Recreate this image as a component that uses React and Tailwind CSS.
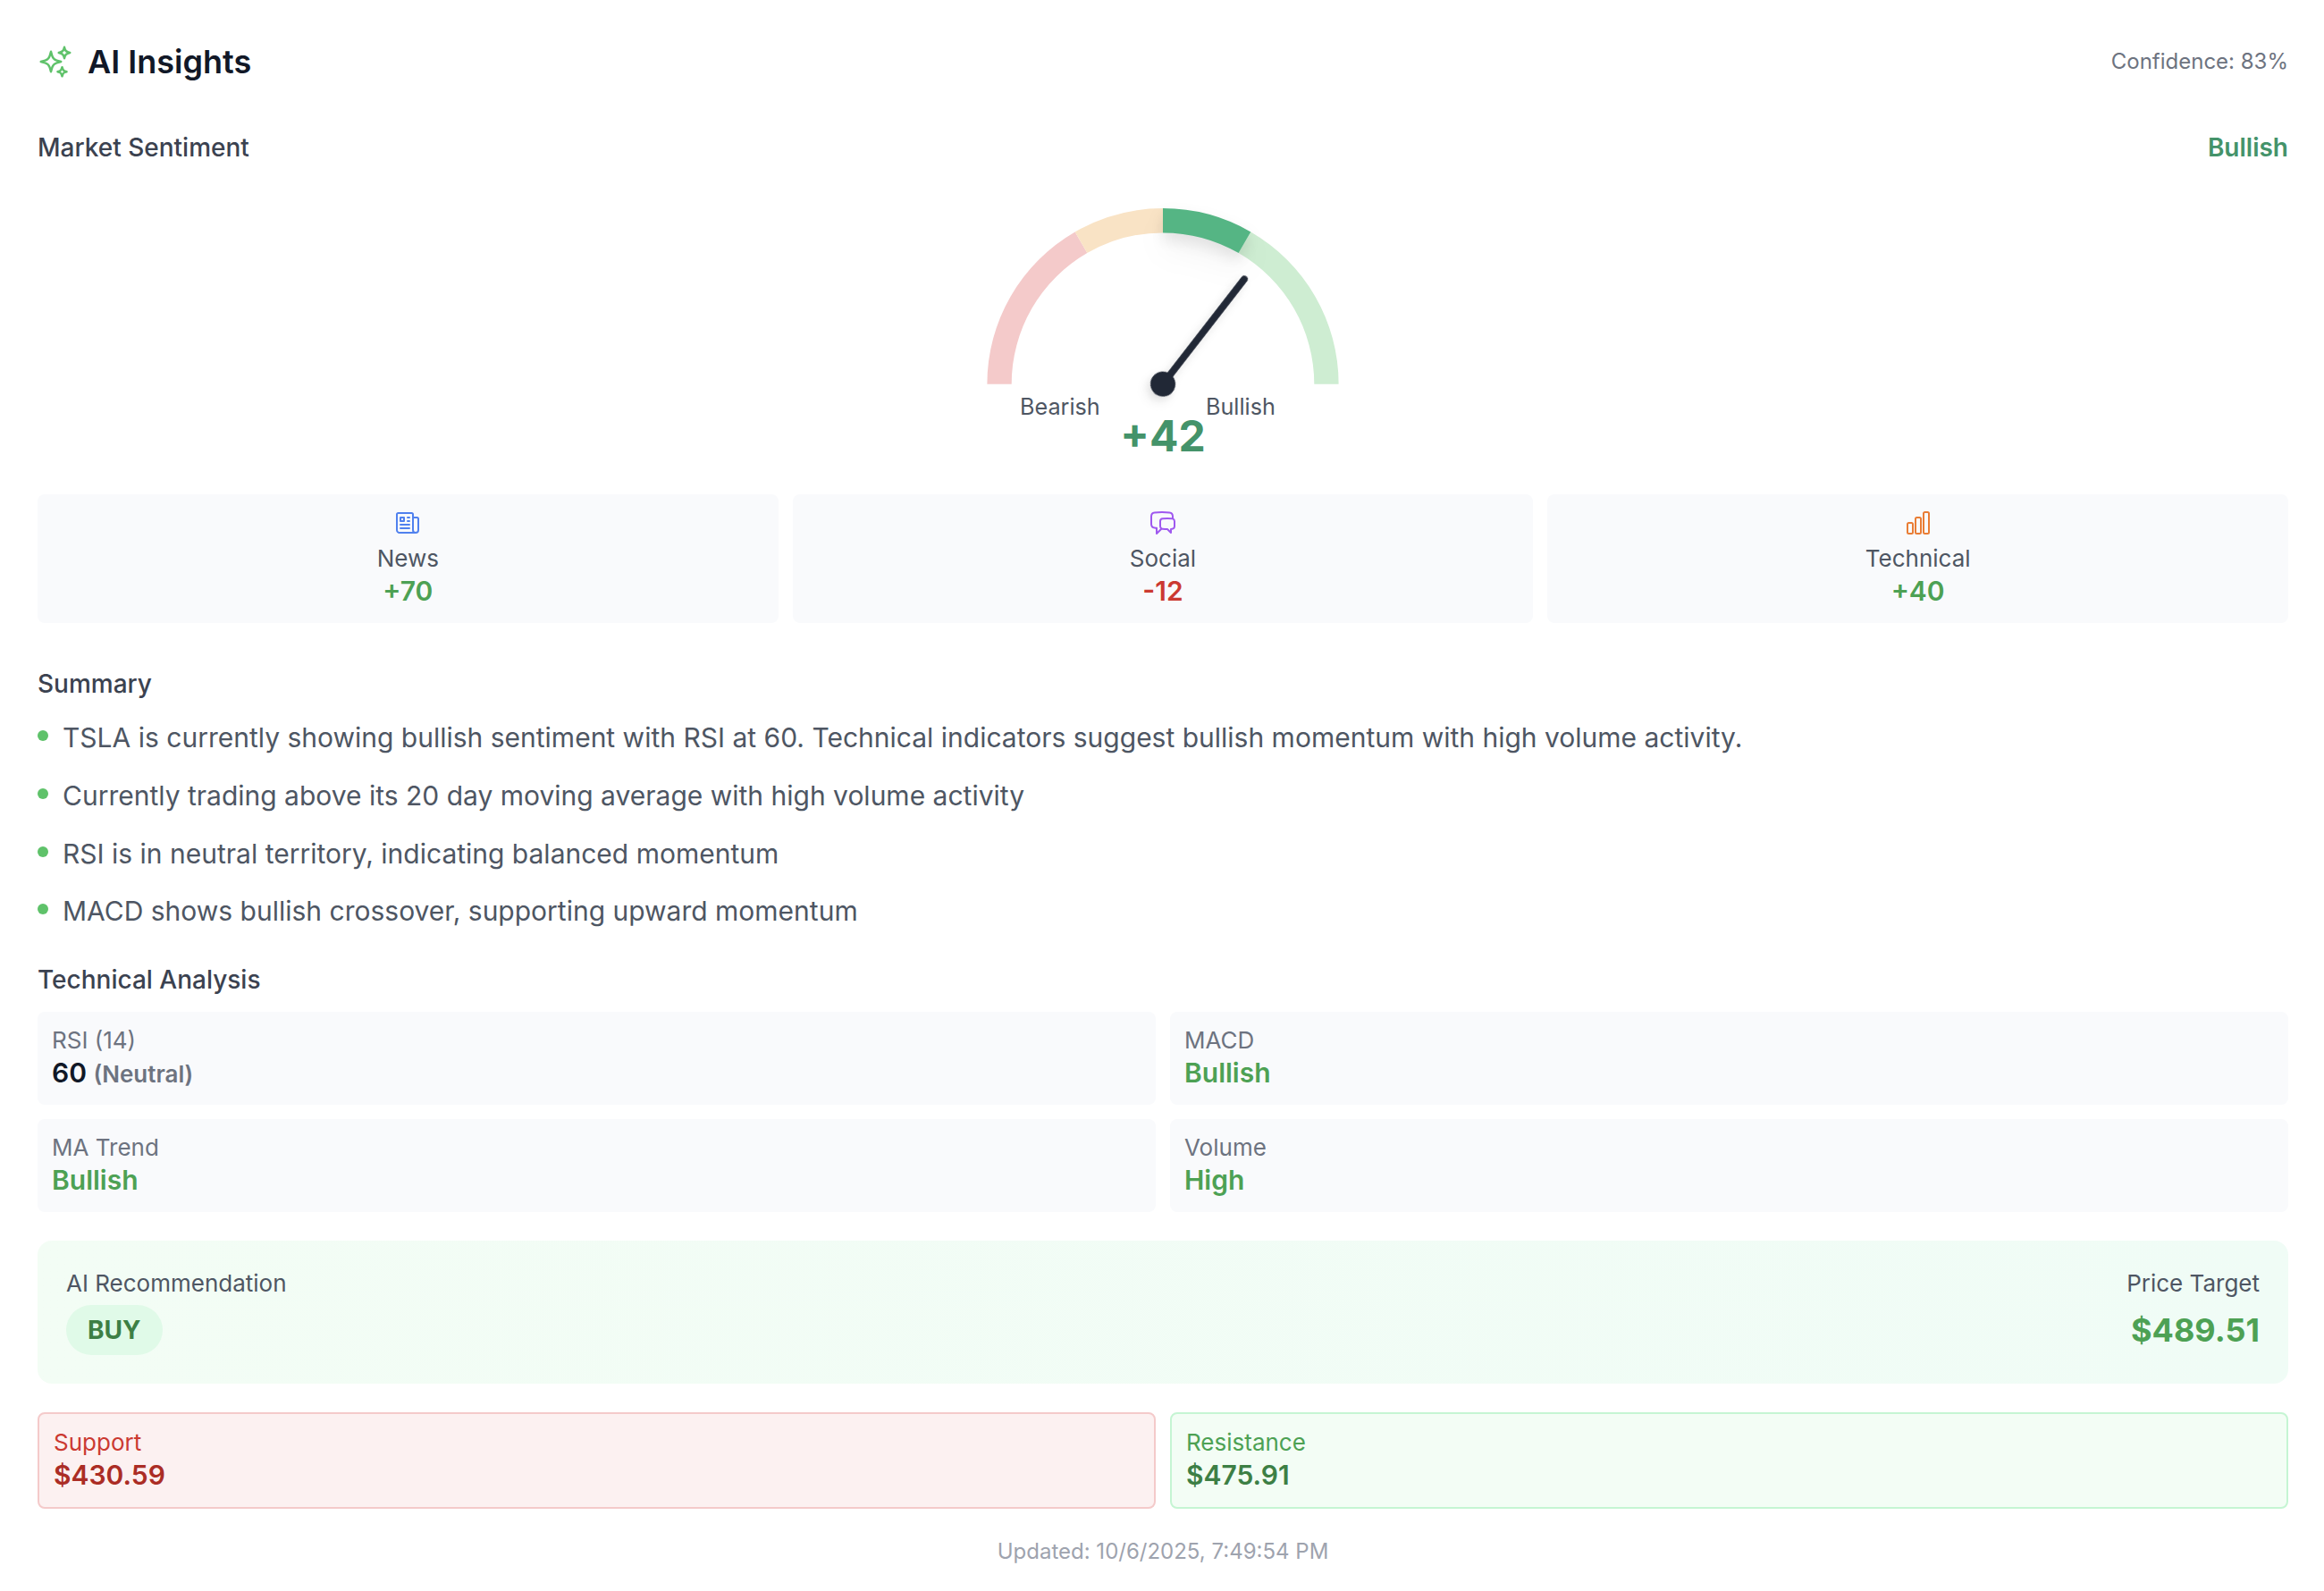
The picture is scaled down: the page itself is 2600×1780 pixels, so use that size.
import {
  HiOutlineSparkles,
  HiOutlineNewspaper,
  HiOutlineChatBubbleLeftRight,
  HiOutlineChartBar,
} from 'react-icons/hi2';

const insights = {
  confidence: 83,
  score: 42,
  summary: [
    'TSLA is currently showing bullish sentiment with RSI at 60. Technical indicators suggest bullish momentum with high volume activity.',
    'Currently trading above its 20 day moving average with high volume activity',
    'RSI is in neutral territory, indicating balanced momentum',
    'MACD shows bullish crossover, supporting upward momentum',
  ],
};

// Point on the gauge, angle 0 = far left, 180 = far right
function polar(r, angle) {
  const rad = ((180 - angle) * Math.PI) / 180;
  return `${220 + r * Math.cos(rad)} ${244.7 - r * Math.sin(rad)}`;
}

function segment(from, to) {
  return `M ${polar(196.6, from)} A 196.6 196.6 0 0 1 ${polar(196.6, to)} L ${polar(169.3, to)} A 169.3 169.3 0 0 0 ${polar(169.3, from)} Z`;
}

function Gauge({ score }) {
  const rotation = (score / 100) * 90;
  return (
    <svg width="440" height="279" viewBox="0 0 440 279" className="overflow-visible">
      <path d={segment(0, 60)} fill="#f4caca" />
      <path d={segment(60, 90)} fill="#f9e3c5" />
      <path d={segment(120, 180)} fill="#ceedd2" />
      <path
        d={segment(90, 120)}
        fill="#55b584"
        className="[filter:drop-shadow(0_20px_16px_rgb(0_0_0/0.04))_drop-shadow(0_8px_8px_rgb(0_0_0/0.1))]"
      />

      {/* Needle */}
      <g transform={`rotate(${rotation} 220 244.7)`}>
        <g className="[filter:drop-shadow(0_8px_6px_rgb(0_0_0/0.07))_drop-shadow(0_4px_4px_rgb(0_0_0/0.06))]">
          <line x1="220" y1="244.7" x2="220" y2="96.2" stroke="#212836" strokeWidth="7.8" strokeLinecap="round" />
          <circle cx="220" cy="244.7" r="14" fill="#212836" />
        </g>
      </g>

      <text x="60" y="279" fontSize="25.2" fill="#4e5663">Bearish</text>
      <text x="268" y="279" fontSize="25.2" fill="#4e5663">Bullish</text>
    </svg>
  );
}

function SourceCard({ icon, label, value, color }) {
  return (
    <div className="bg-[#f9fafc] rounded-lg p-4 flex flex-col items-center">
      {icon}
      <div className="mt-2 text-[26px] leading-8 text-[#4e5663]">{label}</div>
      <div className={`text-[30px] leading-10 font-semibold ${color}`}>{value}</div>
    </div>
  );
}

function IndicatorCard({ label, children }) {
  return (
    <div className="bg-[#f9fafc] rounded-lg p-4 h-[104px]">
      <div className="text-[26px] leading-8 text-[#6d7380]">{label}</div>
      <div className="text-[30px] leading-10 font-semibold text-[#4da154]">{children}</div>
    </div>
  );
}

export default function App() {
  return (
    <div className="w-[2600px] h-[1780px] bg-white pt-[41px] pl-[42px] pr-10 font-['Inter',sans-serif] overflow-hidden">
      {/* Header */}
      <div className="flex items-center justify-between mb-12">
        <div className="flex items-center gap-4">
          <HiOutlineSparkles className="w-10 h-10 text-[#5fc26a]" />
          <h3 className="text-[36px] leading-[56px] font-semibold text-[#111827]">AI Insights</h3>
        </div>
        <span className="text-2xl leading-8 text-[#6d7380]">Confidence: {insights.confidence}%</span>
      </div>

      {/* Market sentiment */}
      <div className="mb-12">
        <div className="flex items-center justify-between text-[28px] leading-10">
          <span className="font-medium text-[#3b4250]">Market Sentiment</span>
          <span className="font-semibold text-[#44936a]">Bullish</span>
        </div>
        <div className="flex flex-col items-center mb-[41px]">
          <Gauge score={insights.score} />
          <div className="text-[48px] leading-[48px] font-bold text-[#44936a]">+{insights.score}</div>
        </div>
        <div className="grid grid-cols-3 gap-4">
          <SourceCard
            icon={<HiOutlineNewspaper className="w-8 h-8 text-[#5081ee]" />}
            label="News"
            value="+70"
            color="text-[#4da154]"
          />
          <SourceCard
            icon={<HiOutlineChatBubbleLeftRight className="w-8 h-8 text-[#9f58ef]" />}
            label="Social"
            value="-12"
            color="text-[#cb3a31]"
          />
          <SourceCard
            icon={<HiOutlineChartBar className="w-8 h-8 text-[#e97d35]" />}
            label="Technical"
            value="+40"
            color="text-[#4da154]"
          />
        </div>
      </div>

      {/* Summary */}
      <div className="mb-8">
        <h4 className="text-[28px] leading-10 font-medium text-[#3b4250] mb-4">Summary</h4>
        <ul className="flex flex-col gap-4">
          {insights.summary.map((line) => (
            <li key={line} className="flex items-start gap-4">
              <span className="w-3 h-3 mt-4 rounded-full bg-[#5fc26a] shrink-0" />
              <span className="text-[30px] leading-[48.75px] text-[#4e5663]">{line}</span>
            </li>
          ))}
        </ul>
      </div>

      {/* Technical analysis */}
      <div className="mb-8">
        <h4 className="text-[28px] leading-10 font-medium text-[#3b4250] mb-4">Technical Analysis</h4>
        <div className="grid grid-cols-2 gap-4">
          <IndicatorCard label="RSI (14)">
            <span className="text-[#111827]">60</span>{' '}
            <span className="text-[26px] text-[#6d7380]">(Neutral)</span>
          </IndicatorCard>
          <IndicatorCard label="MACD">Bullish</IndicatorCard>
          <IndicatorCard label="MA Trend">Bullish</IndicatorCard>
          <IndicatorCard label="Volume">High</IndicatorCard>
        </div>
      </div>

      {/* Recommendation */}
      <div className="flex items-start justify-between bg-linear-to-r from-[#f3fdf5] to-[#f0fcf6] rounded-2xl p-8 mb-8">
        <div>
          <div className="text-[26px] leading-8 text-[#4e5663] mb-2">AI Recommendation</div>
          <div className="w-fit rounded-full bg-[#e0fae8] px-6 py-2 text-[28px] leading-10 font-bold text-[#3d7f45]">
            BUY
          </div>
        </div>
        <div className="text-right">
          <div className="text-[26px] leading-8 text-[#4e5663] mb-2">Price Target</div>
          <div className="text-[36px] leading-[56px] font-bold text-[#4da154]">$489.51</div>
        </div>
      </div>

      {/* Support / resistance */}
      <div className="grid grid-cols-2 gap-4 mb-8">
        <div className="h-[108px] rounded-lg border-2 border-[#f4caca] bg-[#fcf1f1] p-4">
          <div className="text-[26px] leading-8 text-[#cb3a31]">Support</div>
          <div className="text-[30px] leading-10 font-semibold text-[#ab2d25]">$430.59</div>
        </div>
        <div className="h-[108px] rounded-lg border-2 border-[#c5f5d3] bg-[#f3fdf5] p-4">
          <div className="text-[26px] leading-8 text-[#4da154]">Resistance</div>
          <div className="text-[30px] leading-10 font-semibold text-[#3d7f45]">$475.91</div>
        </div>
      </div>

      <div className="text-center text-2xl leading-8 text-[#9ea3ae]">Updated: 10/6/2025, 7:49:54 PM</div>
    </div>
  );
}
